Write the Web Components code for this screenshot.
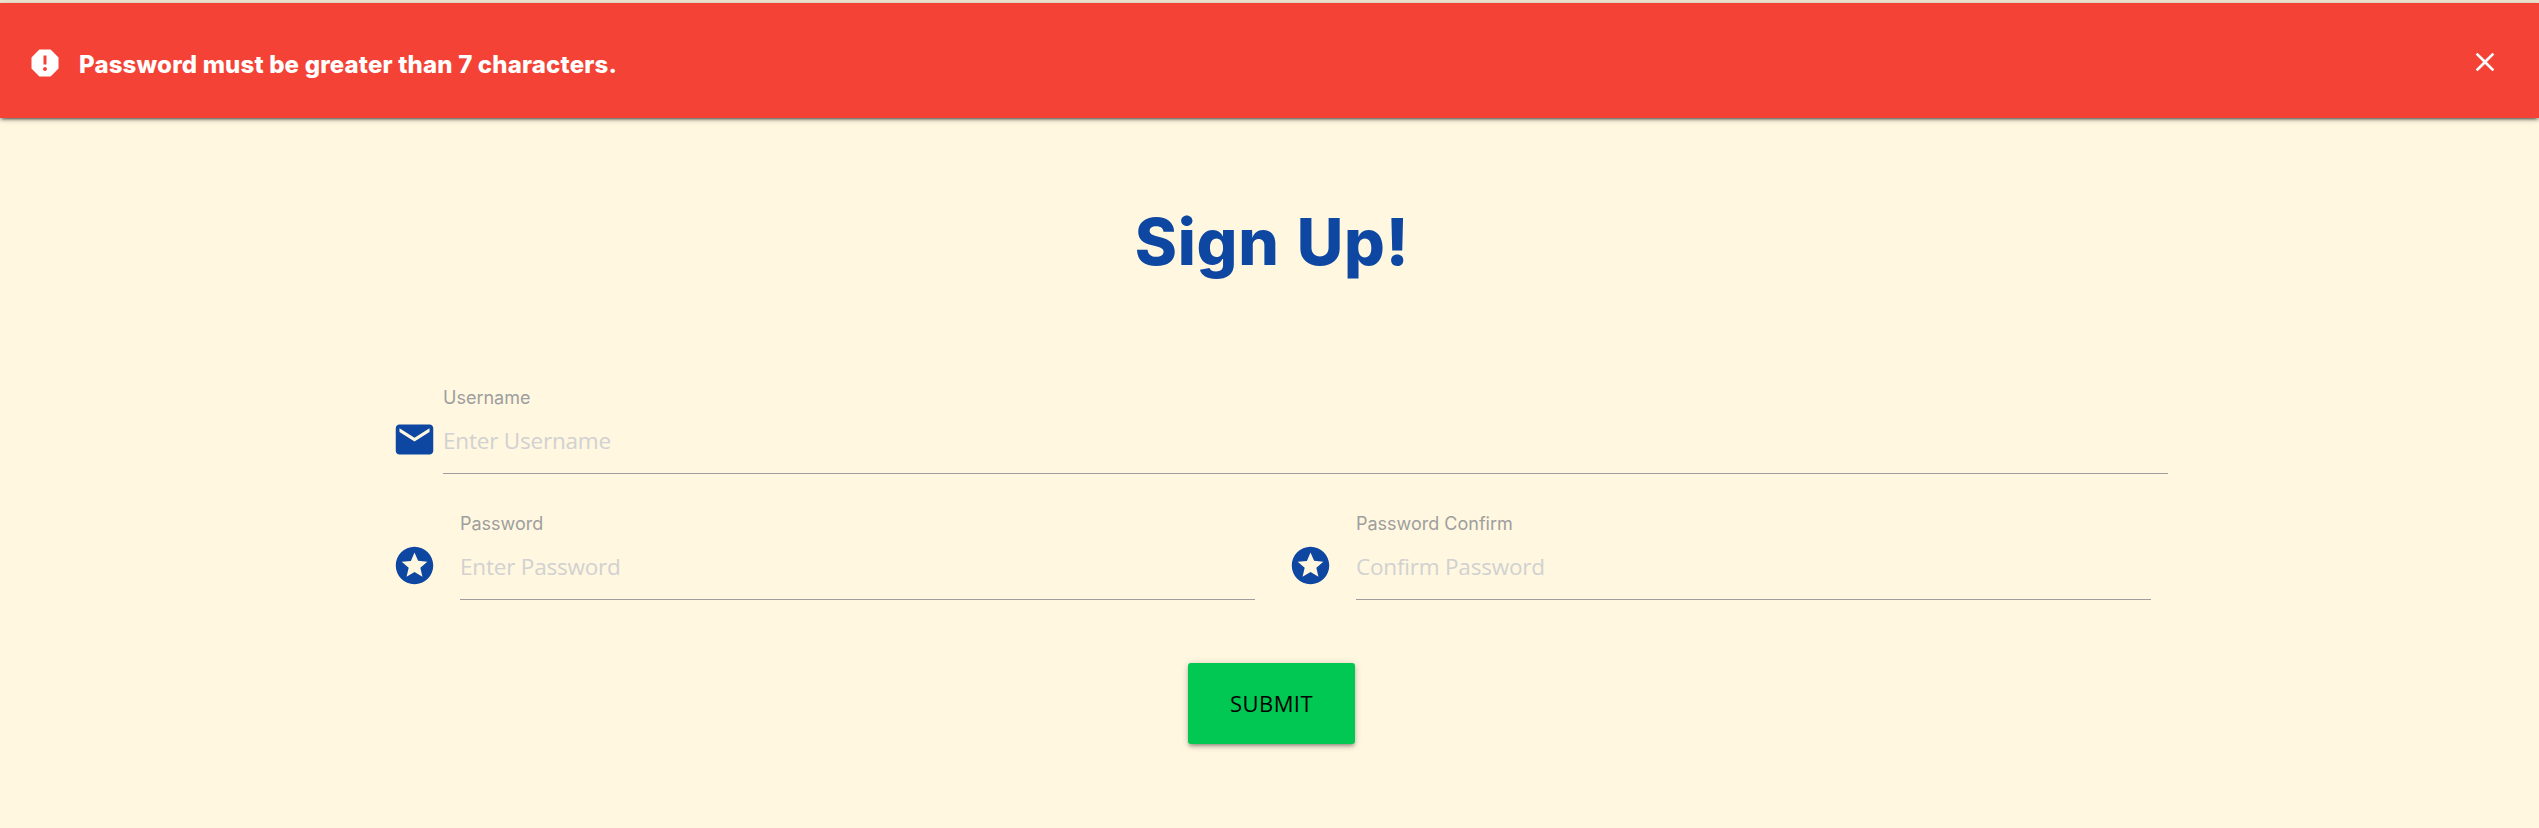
<!DOCTYPE html>
<html lang="en">
<head>
<meta charset="utf-8">
<title>Sign Up</title>
<style>
html,body{margin:0;height:100%;background:#fff7e0}
body{font-family:Inter,"Liberation Sans",sans-serif;overflow:hidden}
</style>
</head>
<body>
<signup-page></signup-page>
<script>
const icons={
 report:'<path d="M15.73 3H8.27L3 8.27v7.46L8.27 21h7.46L21 15.73V8.27L15.73 3zM12 17.3c-.72 0-1.3-.58-1.3-1.3 0-.72.58-1.3 1.3-1.3.72 0 1.3.58 1.3 1.3 0 .72-.58 1.3-1.3 1.3zm1-4.3h-2V7h2v6z"/>',
 close:'<path d="M19 6.41L17.59 5 12 10.59 6.41 5 5 6.41 10.59 12 5 17.59 6.41 19 12 13.41 17.59 19 19 17.59 13.41 12z"/>',
 email:'<path d="M20 4H4c-1.1 0-1.99.9-1.99 2L2 18c0 1.1.9 2 2 2h16c1.1 0 2-.9 2-2V6c0-1.1-.9-2-2-2zm0 4l-8 5-8-5V6l8 5 8-5v2z"/>',
 stars:'<path d="M11.99 2C6.47 2 2 6.48 2 12s4.47 10 9.99 10C17.52 22 22 17.52 22 12S17.52 2 11.99 2zm4.24 16L12 15.45 7.77 18l1.12-4.81-3.73-3.23 4.92-.42L12 5l1.92 4.53 4.92.42-3.73 3.23L16.23 18z"/>'
};
class MdIcon extends HTMLElement{
 connectedCallback(){
  this.attachShadow({mode:'open'}).innerHTML=`<style>:host{display:block;flex:none}svg{display:block;width:100%;height:100%;fill:currentColor}</style><svg viewBox="0 0 24 24" aria-hidden="true">${icons[this.getAttribute('name')]}</svg>`;
 }
}
customElements.define('md-icon',MdIcon);

class AlertBar extends HTMLElement{
 constructor(){super();
  this.attachShadow({mode:'open'}).innerHTML=`<style>
:host{display:flex;align-items:flex-start;box-sizing:border-box;height:115px;padding:42px 38px 0 26.5px;background:#f44336;color:#fff;box-shadow:0 2px 3px 0 rgba(0,0,0,.28),0 4.5px 1.5px -3px rgba(0,0,0,.24),0 1px 7px 0 rgba(0,0,0,.2)}
.lead{width:36px;height:36px}
p{margin:0 auto 0 16.5px;font:800 24px/39px Inter,sans-serif;letter-spacing:.17px;white-space:nowrap}
button{all:unset;width:32px;height:32px;margin-top:1px}
button md-icon{width:32px;height:32px}
</style><md-icon class="lead" name="report"></md-icon><p><slot></slot></p><button aria-label="Close"><md-icon name="close"></md-icon></button>`;
 }
}
customElements.define('alert-bar',AlertBar);

class TextField extends HTMLElement{
 connectedCallback(){
  this.attachShadow({mode:'open'}).innerHTML=`<style>
:host{display:flex;align-items:flex-start;height:92px;--gap:23px}
md-icon{width:45px;height:45px;margin-top:34px;color:#0d47a1}
.body{flex:1;margin-left:var(--gap)}
label{display:block;font:400 18px/24px Inter,sans-serif;color:#9e9e9e;margin-top:3px}
input{display:block;box-sizing:border-box;width:100%;height:64px;margin:0;padding:0 0 2px;border:0;border-bottom:1px solid #9e9e9e;background:none;outline:0;font:400 22.5px "Open Sans","Noto Sans",sans-serif;letter-spacing:-.2px}
input::placeholder{color:#d1d1d1;opacity:1}
</style><md-icon name="${this.getAttribute('icon')}"></md-icon><div class="body"><label for="f">${this.getAttribute('label')}</label><input id="f" placeholder="${this.getAttribute('hint')}"></div>`;
 }
}
customElements.define('text-field',TextField);

class SubmitButton extends HTMLElement{
 constructor(){super();
  this.attachShadow({mode:'open'}).innerHTML=`<style>
:host{display:block}
button{display:block;box-sizing:border-box;width:167px;height:81px;margin:0;padding:0;border:0;border-radius:3px;background:#00c853;color:#000;font:400 22px/81px "Open Sans","Noto Sans",sans-serif;letter-spacing:.45px;text-transform:uppercase;box-shadow:0 3px 3px 0 rgba(0,0,0,.14),0 4.5px 1.5px -3px rgba(0,0,0,.12),0 1.5px 7.5px 0 rgba(0,0,0,.2)}
</style><button type="submit"><slot></slot></button>`;
 }
}
customElements.define('submit-button',SubmitButton);

class SignupPage extends HTMLElement{
 constructor(){super();
  this.attachShadow({mode:'open'}).innerHTML=`<style>
:host{display:block;height:828px;background:#fff7e0}
.strip{height:3px;background:#f1e9d4}
h1{margin:84px 0 0;padding-left:5px;text-align:center;font:800 64px/80px Inter,sans-serif;color:#0d47a1;letter-spacing:.75px;word-spacing:2.5px}
form{width:1776px;margin:101px 0 0 392px}
.wide{--gap:6px}
.row{display:grid;grid-template-columns:863px 863px;column-gap:33px;margin-top:34px}
submit-button{width:167px;margin:62px 0 0 796px}
</style>
<div class="strip"></div>
<alert-bar>Password must be greater than 7 characters.</alert-bar>
<main><h1>Sign Up!</h1>
<form>
<text-field class="wide" icon="email" label="Username" hint="Enter Username"></text-field>
<div class="row">
<text-field icon="stars" label="Password" hint="Enter Password"></text-field>
<text-field icon="stars" label="Password Confirm" hint="Confirm Password"></text-field>
</div>
<submit-button>Submit</submit-button>
</form></main>`;
 }
}
customElements.define('signup-page',SignupPage);
</script>
</body>
</html>
